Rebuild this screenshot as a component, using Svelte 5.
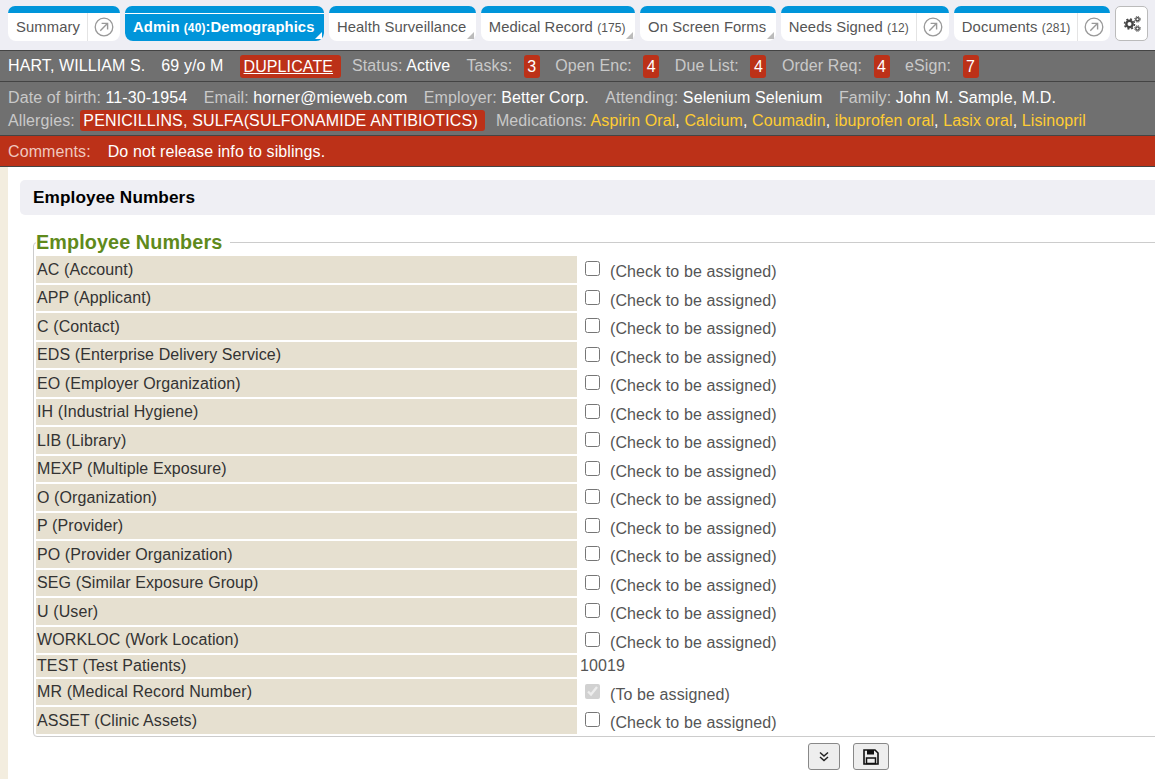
<script>
    let tabs = [
        { label: "Summary", link: true },
        { label: "Admin", count: "(40)", sub: ":Demographics", active: true, menu: true },
        { label: "Health Surveillance", menu: true },
        { label: "Medical Record", count: "(175)", menu: true },
        { label: "On Screen Forms", menu: true },
        { label: "Needs Signed", count: "(12)", link: true },
        { label: "Documents", count: "(281)", link: true }
    ]

    let alerts = [
        { label: "Tasks:", count: 3 },
        { label: "Open Enc:", count: 4 },
        { label: "Due List:", count: 4 },
        { label: "Order Req:", count: 4 },
        { label: "eSign:", count: 7 }
    ]

    let details = [
        ["Date of birth:", "11-30-1954"],
        ["Email:", "horner@mieweb.com"],
        ["Employer:", "Better Corp."],
        ["Attending:", "Selenium Selenium"],
        ["Family:", "John M. Sample, M.D."]
    ]

    let meds = ["Aspirin Oral", "Calcium", "Coumadin", "ibuprofen oral", "Lasix oral", "Lisinopril"]

    let numbers = [
        { name: "AC (Account)" },
        { name: "APP (Applicant)" },
        { name: "C (Contact)" },
        { name: "EDS (Enterprise Delivery Service)" },
        { name: "EO (Employer Organization)" },
        { name: "IH (Industrial Hygiene)" },
        { name: "LIB (Library)" },
        { name: "MEXP (Multiple Exposure)" },
        { name: "O (Organization)" },
        { name: "P (Provider)" },
        { name: "PO (Provider Organization)" },
        { name: "SEG (Similar Exposure Group)" },
        { name: "U (User)" },
        { name: "WORKLOC (Work Location)" },
        { name: "TEST (Test Patients)", value: "10019" },
        { name: "MR (Medical Record Number)", locked: true },
        { name: "ASSET (Clinic Assets)" }
    ]
</script>

<div class="page">
    <nav class="tabbar">
        {#each tabs as tab}
            <div class="tab" class:active={tab.active} class:has-menu={tab.menu} class:has-link={tab.link}>
                <span class="tab-label">
                    {tab.label}{#if tab.count}&nbsp;<small>{tab.count}</small>{/if}{#if tab.sub}{tab.sub}{/if}
                </span>
                {#if tab.link}
                    <span class="tab-link">
                        <svg width="20" height="20" viewBox="0 0 20 20">
                            <circle cx="10" cy="10" r="8.8" fill="none" stroke="#999" stroke-width="1.3" />
                            <path d="M6.3 13.7 L13.4 6.6 M7.6 6.4 H13.6 V12.4" fill="none" stroke="#999" stroke-width="1.4" />
                        </svg>
                    </span>
                {/if}
                {#if tab.menu}<span class="corner"></span>{/if}
            </div>
        {/each}
        <button class="gear" aria-label="Settings">
            <svg width="20" height="20" viewBox="0 0 20 20">
                <circle cx="7.500" cy="11" r="3.200" fill="none" stroke="#444" stroke-width="2.400" />
                <circle cx="7.500" cy="11" r="5" fill="none" stroke="#444" stroke-width="1.500" stroke-dasharray="1.960 1.970" />
                <circle cx="15.500" cy="6.300" r="1.700" fill="none" stroke="#444" stroke-width="1.300" />
                <circle cx="15.500" cy="6.300" r="2.800" fill="none" stroke="#444" stroke-width="1" stroke-dasharray="1.200 1" />
                <circle cx="15.500" cy="15.500" r="1.700" fill="none" stroke="#444" stroke-width="1.300" />
                <circle cx="15.500" cy="15.500" r="2.800" fill="none" stroke="#444" stroke-width="1" stroke-dasharray="1.200 1" />
            </svg>
        </button>
    </nav>

    <header class="patient">
        <div class="summary">
            <span class="who">HART, WILLIAM S.</span>
            <span class="who">69 y/o M</span>
            <span class="duplicate"><u>DUPLICATE</u></span>
            <span class="status">Status: <b>Active</b></span>
            {#each alerts as alert}
                <span class="alert">{alert.label}<i>{alert.count}</i></span>
            {/each}
        </div>
        <div class="details">
            <div class="line">
                {#each details as item}
                    <span>{item[0]} <b>{item[1]}</b></span>
                {/each}
            </div>
            <div class="line second">
                <span class="allergies">Allergies: <b>PENICILLINS, SULFA(SULFONAMIDE ANTIBIOTICS)</b></span>
                <span>Medications: {#each meds as med, i}<em>{med}</em>{#if i < meds.length - 1}<b>,&nbsp;</b>{/if}{/each}</span>
            </div>
        </div>
        <div class="comments"><span>Comments:</span><b>Do not release info to siblings.</b></div>
    </header>

    <main class="content">
        <h2 class="panel-title">Employee Numbers</h2>
        <fieldset>
            <legend>Employee Numbers</legend>
            <div class="rows">
                {#each numbers as row}
                    <div class="row" class:plain={row.value}>
                        <div class="name">{row.name}</div>
                        {#if row.value}
                            <div class="value">{row.value}</div>
                        {:else}
                            <div class="check">
                                <input type="checkbox" checked={row.locked} disabled={row.locked} />
                                <span>{row.locked ? "(To be assigned)" : "(Check to be assigned)"}</span>
                            </div>
                        {/if}
                    </div>
                {/each}
            </div>
        </fieldset>
        <div class="actions">
            <button class="down" aria-label="Next">
                <svg width="12" height="12" viewBox="0 0 12 12">
                    <path d="M2 1.500 L6 5 L10 1.500 M2 6 L6 9.500 L10 6" fill="none" stroke="#222" stroke-width="1.500" />
                </svg>
            </button>
            <button class="save" aria-label="Save">
                <svg width="16" height="16" viewBox="0 0 16 16">
                    <path d="M1.500 1 H12 L15 4 V15 H1 V1 Z" fill="none" stroke="#111" stroke-width="1.600" />
                    <path d="M4 1 H11 V5.500 H4 Z" fill="#111" />
                    <path d="M3.500 9 H12.500 V14.500 H3.500 Z" fill="none" stroke="#111" stroke-width="1.500" />
                </svg>
            </button>
        </div>
    </main>
</div>

<style>
    :global(body){
        margin: 0;
        background-color: white;
        overflow: hidden;
    }
    .page{
        width: 1155px;
        height: 779px;
        overflow: hidden;
        display: flex;
        flex-direction: column;
        font-family: "Liberation Sans", Arial, sans-serif;
        font-size: 16px;
        letter-spacing: 0.1px;
        color: #333;
    }
    .tabbar{
        height: 50px;
        box-sizing: border-box;
        flex: none;
        padding: 6px 0 0 8px;
        display: flex;
        align-items: flex-start;
        gap: 5px;
        background-color: #eeeef4;
    }
    .tab{
        position: relative;
        height: 35px;
        box-sizing: border-box;
        border-top: 7px solid #0095da;
        border-radius: 7px 7px 8px 8px;
        background-color: white;
        display: flex;
        align-items: stretch;
        color: #555;
        font-size: 14.8px;
    }
    .tab-label{
        padding: 0 9px 0 8px;
        line-height: 28px;
        white-space: nowrap;
    }
    .has-menu .tab-label{
        padding-right: 9.4px;
    }
    .has-link .tab-label{
        padding-right: 7px;
    }
    .tab-label small{
        font-size: 12px;
    }
    .tab.active{
        background-color: #0095da;
        color: white;
        font-weight: bold;
        box-shadow: inset 0 1px 0 white;
    }
    .tab-link{
        width: 33px;
        box-sizing: border-box;
        border-left: 1px solid #e4e4e4;
        display: flex;
        align-items: center;
        justify-content: center;
    }
    .corner{
        position: absolute;
        right: 2px;
        bottom: 2px;
        width: 0;
        height: 0;
        border-style: solid;
        border-width: 0 0 7px 7px;
        border-color: transparent transparent #bbb transparent;
    }
    .active .corner{
        border-bottom-color: white;
    }
    .gear{
        width: 33px;
        height: 35px;
        padding: 0 0 2px 0;
        background-color: white;
        border: 1px solid #bbb;
        border-radius: 5px;
        display: flex;
        align-items: center;
        justify-content: center;
    }
    .patient{
        flex: none;
        background-color: #707070;
        color: #c9c9c9;
    }
    .patient b{
        font-weight: normal;
        color: white;
    }
    .summary{
        height: 32px;
        box-sizing: border-box;
        border-top: 1px solid #444;
        border-bottom: 1px solid #444;
        padding-left: 8px;
        display: flex;
        align-items: center;
        white-space: nowrap;
    }
    .who{
        color: white;
        margin-right: 16px;
    }
    .duplicate{
        background-color: #bc3118;
        color: white;
        border-radius: 3px;
        padding: 2px 8px 2px 4px;
        line-height: 19px;
        margin-right: 11px;
    }
    .status{
        margin-right: 16px;
    }
    .alert{
        margin-right: 15.500px;
        display: flex;
        align-items: center;
    }
    .alert i{
        font-style: normal;
        color: white;
        background-color: #bc3118;
        border-radius: 3px;
        width: 16px;
        height: 23px;
        line-height: 23px;
        text-align: center;
        margin-left: 11.500px;
    }
    .details{
        height: 54px;
        box-sizing: border-box;
        border-bottom: 1px solid #444;
        padding: 4px 0 0 8px;
    }
    .line{
        display: flex;
        gap: 16.5px;
        height: 23px;
        align-items: center;
        white-space: nowrap;
    }
    .second{
        gap: 11px;
    }
    .allergies b{
        background-color: #bc3118;
        border-radius: 3px;
        padding: 2px 7px 2px 3px;
        margin-left: 1px;
        letter-spacing: 0.16px;
    }
    .patient em{
        font-style: normal;
        color: #ffcc33;
    }
    .comments{
        height: 31px;
        box-sizing: border-box;
        border-bottom: 1px solid #444;
        background-color: #bc3118;
        color: #f0c8bf;
        padding: 1px 0 0 8px;
        display: flex;
        gap: 17px;
        align-items: center;
    }
    .content{
        flex: 1;
        margin: 0;
        padding: 13px 0 0 12px;
        background-color: white;
        border-left: 8px solid #f3eddf;
    }
    .panel-title{
        margin: 0;
        height: 35px;
        box-sizing: border-box;
        padding-left: 13px;
        line-height: 34px;
        font-size: 17.2px;
        color: black;
        background-color: #efeff4;
        border-radius: 5px 0 0 5px;
    }
    fieldset{
        margin: 16px -20px 0 13px;
        padding: 0 0 2.500px 2px;
        border: 1px solid #ccc;
        border-radius: 4px;
    }
    legend{
        padding: 0 8px 0 0;
        font-size: 19.800px;
        font-weight: bold;
        line-height: 22px;
        color: #5f8a1c;
    }
    .rows{
        display: flex;
        flex-direction: column;
        gap: 2px;
        margin-top: 3px;
    }
    .row{
        display: grid;
        grid-template-columns: 541px 1fr;
        grid-template-rows: 26.5px;
        height: 26.5px;
    }
    .row.plain{
        grid-template-rows: 21.5px;
        height: 21.5px;
    }
    .name{
        background-color: #e6e0d0;
        padding: 0.6px 0 0 1px;
        line-height: 25.900px;
        color: #333;
    }
    .plain .name{
        padding-top: 0;
        line-height: 21px;
    }
    .value{
        padding-left: 3px;
        line-height: 21px;
        color: #555;
    }
    .check{
        display: flex;
        align-items: flex-start;
        padding-left: 8px;
        color: #555;
    }
    .check input{
        width: 15px;
        height: 15px;
        margin: 5px 10px 0 0;
    }
    .check span{
        line-height: 31px;
    }
    .actions{
        display: flex;
        gap: 13px;
        padding: 6px 0 0 788px;
    }
    .actions button{
        height: 27px;
        padding: 0;
        background-color: #eee;
        border: 1px solid #888;
        border-radius: 3px;
        display: flex;
        align-items: center;
        justify-content: center;
    }
    .down{
        width: 32px;
    }
    .save{
        width: 36px;
    }
</style>
